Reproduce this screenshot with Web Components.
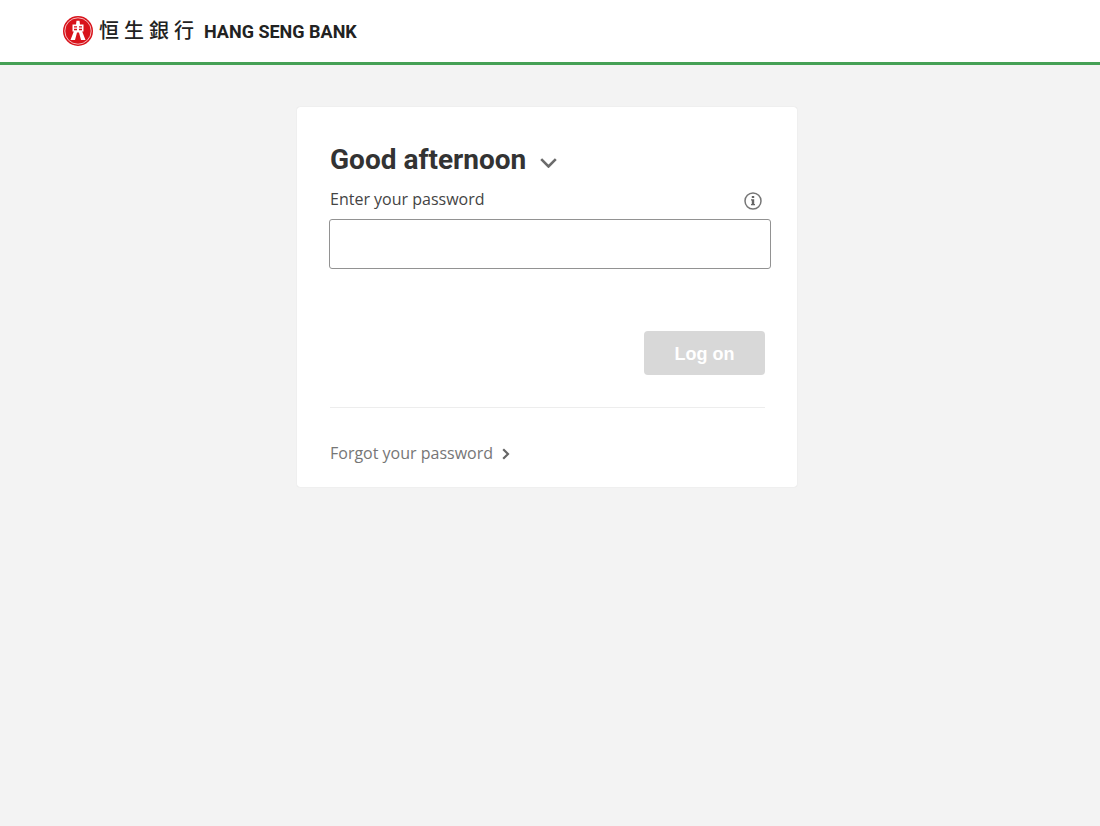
<!DOCTYPE html>
<html lang="en">
<head>
<meta charset="utf-8">
<meta name="viewport" content="width=device-width, initial-scale=1">
<title>Log on | Hang Seng Bank</title>
<style>
  body {
    margin: 0;
    min-height: 100vh;
    background: #f3f3f3;
    color: #333;
    font: 16px/24px "Open Sans", "Noto Sans", sans-serif;
  }
</style>
</head>
<body>

<template id="bank-header">
  <style>
    :host {
      display: block;
      background: #fff;
      border-bottom: 3px solid #45a055;
    }
    header {
      display: flex;
      align-items: center;
      height: 62px;
      padding: 0 63px;
    }
    a {
      display: flex;
      align-items: center;
      color: #222;
      text-decoration: none;
    }
    svg {
      width: 30px;
      height: 30px;
      margin-right: 6px;
    }
    .zh {
      display: flex;
      gap: 5px;
      margin-right: 10px;
      padding-bottom: 2px;
      font: 500 20px/28px "Noto Sans CJK TC", sans-serif;
    }
    .en {
      padding-top: 2px;
      font: 700 18px/28px Roboto, sans-serif;
    }
  </style>
  <header>
    <a href="#">
      <svg viewBox="0 0 30 30" aria-hidden="true">
        <circle cx="15" cy="15" r="15" fill="#d8131b"/>
        <circle cx="15" cy="15" r="13.200" fill="none" stroke="#fff" stroke-width=".7"/>
        <path d="M13.500 4.800h3l.5 3.700h3.500v7h-1.300L22.500 24H18l-2-7.500h-2L12 24H7.500l3.300-8.500H9.500v-7H13z" fill="#fff"/>
        <path d="M11 10.200h3v1.200h-3zM11 12.700h3v1.500h-3zM16 10.200h3v1.200h-3zM16 12.700h3v1.500h-3z" fill="#d8131b"/>
      </svg>
      <span class="zh" lang="zh-Hant"><span>恒</span><span>生</span><span>銀</span><span>行</span></span>
      <span class="en">HANG SENG BANK</span>
    </a>
  </header>
</template>

<template id="logon-card">
  <style>
    :host {
      display: block;
      box-sizing: border-box;
      max-width: 500px;
      padding: 37px 26px 22px 32px;
      background: #fff;
      border-radius: 3px;
      box-shadow: 0 0 1px #ccc;
    }
  </style>
  <slot></slot>
</template>

<template id="user-greeting">
  <style>
    :host {
      display: block;
    }
    h1 {
      margin: 0;
      padding-left: 1px;
      font: 700 28px/32px Roboto, sans-serif;
    }
    button {
      display: flex;
      align-items: center;
      gap: 14px;
      padding: 0;
      border: 0;
      background: none;
      color: inherit;
      font: inherit;
      cursor: pointer;
    }
    svg {
      width: 17px;
      height: 10px;
      margin-top: 5px;
    }
  </style>
  <h1>
    <button type="button" aria-haspopup="true">
      <slot></slot>
      <svg viewBox="0 0 17 10" aria-hidden="true">
        <path d="M1.200 1.200l7.300 7.300 7.300-7.300" fill="none" stroke="#6b6b6b" stroke-width="2.600"/>
      </svg>
    </button>
  </h1>
</template>

<template id="password-form">
  <style>
    :host {
      display: block;
      margin-top: 11px;
    }
    .row {
      display: flex;
      align-items: center;
      justify-content: space-between;
      padding: 0 9px 0 1px;
    }
    label {
      color: #444;
    }
    .info {
      display: flex;
      padding: 0;
      border: 0;
      background: none;
      cursor: pointer;
    }
    .info svg {
      width: 18px;
      height: 18px;
      margin-top: 3px;
    }
    input {
      display: block;
      box-sizing: border-box;
      width: 100%;
      height: 50px;
      margin: 8px 0 0;
      padding: 0 12px;
      border: 1px solid #929292;
      border-radius: 3px;
      background: #fff;
      font: inherit;
    }
    .actions {
      display: flex;
      justify-content: flex-end;
      margin: 62px 6px 0 1px;
      padding-bottom: 32px;
      border-bottom: 1px solid #ededed;
    }
    .submit {
      width: 121px;
      height: 44px;
      padding: 2px 0 0;
      border: 0;
      border-radius: 4px;
      background: #d8d8d8;
      color: #fff;
      font: 700 18px/24px "Liberation Sans", Arial, sans-serif;
    }
  </style>
  <form>
    <div class="row">
      <label for="password">Enter your password</label>
      <button class="info" type="button" aria-label="Password help">
        <svg viewBox="0 0 18 18" aria-hidden="true">
          <circle cx="9" cy="9" r="8" fill="none" stroke="#767676" stroke-width="1.500"/>
          <path d="M7.800 4h2.400v2H7.800zM7 7.300h3.200V12H11v1.300H7V12h.8V8.600H7z" fill="#666"/>
        </svg>
      </button>
    </div>
    <input id="password" type="password" autocomplete="current-password">
    <div class="actions">
      <button class="submit" type="submit" disabled>Log on</button>
    </div>
  </form>
</template>

<template id="chevron-link">
  <style>
    :host {
      display: block;
      margin-top: 33px;
      padding-left: 1px;
    }
    a {
      display: inline-flex;
      align-items: center;
      gap: 9px;
      color: #767676;
      text-decoration: none;
    }
    svg {
      width: 8px;
      height: 12px;
      margin-top: 2px;
    }
  </style>
  <a href="#">
    <slot></slot>
    <svg viewBox="0 0 8 12" aria-hidden="true">
      <path d="M1.200 1.200L6 6l-4.800 4.800" fill="none" stroke="#666" stroke-width="2.200"/>
    </svg>
  </a>
</template>

<style>
  main {
    padding: 42px 16px 42px 27%;
  }
</style>

<bank-header></bank-header>
<main>
  <logon-card>
    <user-greeting>Good afternoon</user-greeting>
    <password-form></password-form>
    <chevron-link>Forgot your password</chevron-link>
  </logon-card>
</main>

<script>
  (function() {
    let define = (name, setup) => {
      customElements.define(name, class extends HTMLElement {
        constructor() {
          super();
          let content = document.querySelector(`template#${name}`).content.cloneNode(true);
          this.attachShadow({mode: 'open'}).append(content);
          if (setup) setup(this.shadowRoot);
        }
      });
    };

    define('bank-header');
    define('logon-card');
    define('user-greeting');
    define('chevron-link');
    define('password-form', root => {
      root.querySelector('form').addEventListener('submit', e => e.preventDefault());
    });
  })();
</script>
</body>
</html>
